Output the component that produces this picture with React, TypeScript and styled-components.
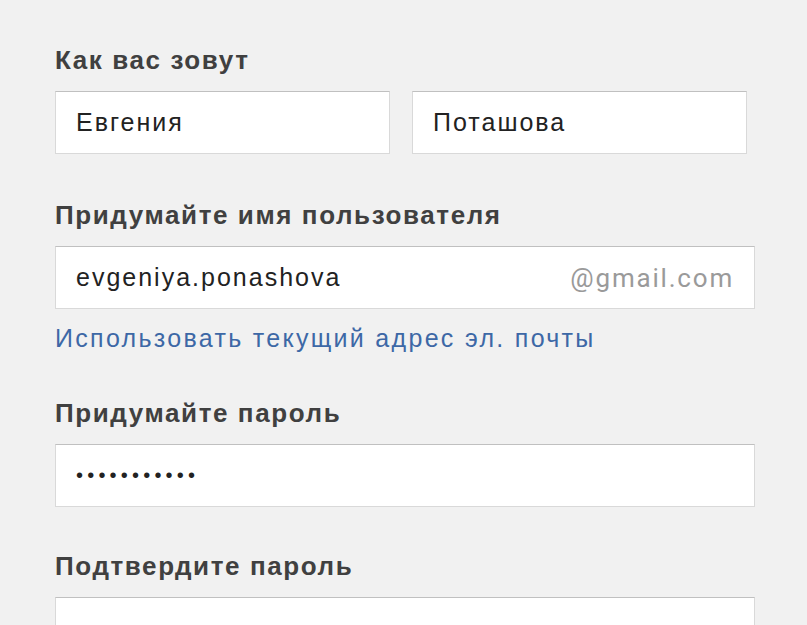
import React from "react";
import styled, { createGlobalStyle } from "styled-components";

const GlobalStyle = createGlobalStyle`
  html, body {
    margin: 0;
    padding: 0;
    background: #f1f1f1;
  }
  body {
    font-family: "Liberation Sans", Arial, sans-serif;
  }
`;

const Form = styled.form`
  width: 700px;
  padding: 45px 0 0 55px;
  height: 580px;
  overflow: hidden;
`;

const Section = styled.div<{ $top?: number }>`
  display: flex;
  flex-direction: column;
  margin-top: ${(p) => p.$top ?? 0}px;
`;

const Label = styled.div`
  font-size: 26px;
  line-height: 30px;
  font-weight: bold;
  letter-spacing: 1.6px;
  color: #404040;
  margin-bottom: 16px;
`;

const Row = styled.div`
  display: flex;
  gap: 22px;
  width: 692px;
`;

const Box = styled.div<{ $grow?: boolean }>`
  flex: ${(p) => (p.$grow ? "1 1 0" : "none")};
  box-sizing: border-box;
  height: 63px;
  display: flex;
  align-items: center;
  justify-content: space-between;
  padding: 0 20px 0 20px;
  background: #fff;
  border: 1px solid #d9d9d9;
  border-top-color: #c0c0c0;
  font-size: 25px;
  letter-spacing: 2px;
  color: #222;
`;

const Suffix = styled.span`
  color: #9a9a9a;
  font-family: Roboto, "Liberation Sans", sans-serif;
  font-size: 26px;
  letter-spacing: 1.8px;
`;

const Dots = styled.span`
  font-size: 20px;
  letter-spacing: 4.2px;
  color: #222;
`;

const Link = styled.a`
  margin-top: 14px;
  font-size: 25px;
  line-height: 30px;
  letter-spacing: 2.3px;
  color: #3d68a6;
  text-decoration: none;
  cursor: pointer;
`;

export default function App() {
  return (
    <>
      <GlobalStyle />
      <Form>
        <Section>
          <Label>Как вас зовут</Label>
          <Row>
            <Box $grow>Евгения</Box>
            <Box $grow>Поташова</Box>
          </Row>
        </Section>
        <Section $top={46}>
          <Label>Придумайте имя пользователя</Label>
          <Box>
            <span>evgeniya.ponashova</span>
            <Suffix>@gmail.com</Suffix>
          </Box>
          <Link>Использовать текущий адрес эл. почты</Link>
        </Section>
        <Section $top={45}>
          <Label>Придумайте пароль</Label>
          <Box>
            <Dots>•••••••••••</Dots>
          </Box>
        </Section>
        <Section $top={44}>
          <Label>Подтвердите пароль</Label>
          <Box />
        </Section>
      </Form>
    </>
  );
}
